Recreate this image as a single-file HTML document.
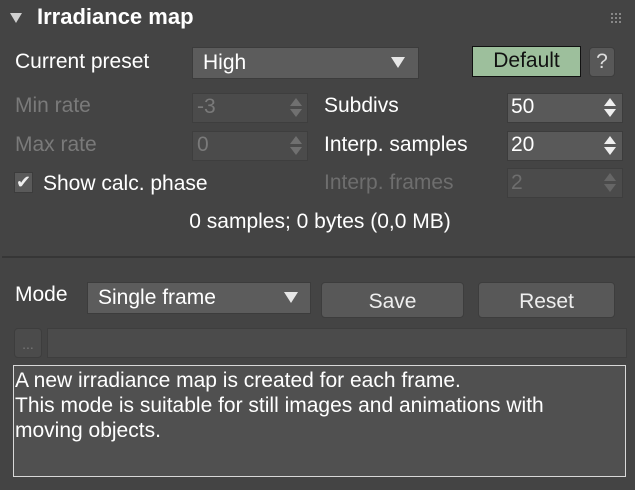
<!DOCTYPE html>
<html><head><meta charset="utf-8"><style>
*{margin:0;padding:0;box-sizing:border-box}
body{width:635px;height:490px;background:#444444;font-family:"Liberation Sans","DejaVu Sans",sans-serif;font-size:21px;color:#fff;position:relative;overflow:hidden}
.a{position:absolute;white-space:nowrap}
.f{position:absolute;background:#595959;border:1px solid #3c3c3c}
.fd{position:absolute;background:#4b4b4b;border:1px solid #3e3e3e}
.dis{color:#7a7a7a}
.btn{position:absolute;background:#585858;border:1px solid #3d3d3d;border-radius:4px;text-align:center;color:#eee}
</style></head><body>
<svg class="a" style="left:9px;top:12px" width="14" height="12"><polygon points="1,1 13,1 7,11" fill="#cfcfcf"/></svg>
<div class="a" style="left:37px;top:4px;font-weight:bold;font-size:22px">Irradiance map</div>
<svg class="a" style="left:611px;top:13px" width="12" height="10" fill="#888"><rect x="0" y="0" width="2" height="2"/><rect x="4" y="0" width="2" height="2"/><rect x="8" y="0" width="2" height="2"/><rect x="0" y="4" width="2" height="2"/><rect x="4" y="4" width="2" height="2"/><rect x="8" y="4" width="2" height="2"/><rect x="0" y="8" width="2" height="2"/><rect x="4" y="8" width="2" height="2"/><rect x="8" y="8" width="2" height="2"/></svg>

<div class="a" style="left:15px;top:50px">Current preset</div>
<div class="f" style="left:192px;top:47px;width:227px;height:32px;background:#5c5c5c"></div>
<div class="a" style="left:203px;top:51px">High</div>
<svg class="a" style="left:391px;top:57px" width="14" height="12"><polygon points="0,0 14,0 7,11" fill="#e6e6e6"/></svg>
<div class="a" style="left:472px;top:46px;width:109px;height:31px;background:#9dbf9c;border:1px solid #111;color:#111;text-align:center;line-height:28px">Default</div>
<div class="btn" style="left:589px;top:47px;width:26px;height:30px;line-height:28px;color:#ddd">?</div>

<div class="a dis" style="left:15px;top:94px">Min rate</div>
<div class="fd" style="left:192px;top:93px;width:116px;height:30px"></div>
<div class="a dis" style="left:197px;top:95px">-3</div>
<svg class="a" style="left:289px;top:98px" width="14" height="20"><polygon points="7,0 13,8 1,8" fill="#707070"/><polygon points="1,11 13,11 7,19" fill="#707070"/></svg>
<div class="a dis" style="left:15px;top:133px">Max rate</div>
<div class="fd" style="left:192px;top:131px;width:116px;height:30px"></div>
<div class="a dis" style="left:197px;top:133px">0</div>
<svg class="a" style="left:289px;top:136px" width="14" height="20"><polygon points="7,0 13,8 1,8" fill="#707070"/><polygon points="1,11 13,11 7,19" fill="#707070"/></svg>

<div class="a" style="left:324px;top:94px">Subdivs</div>
<div class="f" style="left:507px;top:93px;width:116px;height:30px"></div>
<div class="a" style="left:511px;top:95px">50</div>
<svg class="a" style="left:603px;top:98px" width="14" height="20"><polygon points="7,0 13,8 1,8" fill="#eee"/><polygon points="1,11 13,11 7,19" fill="#eee"/></svg>
<div class="a" style="left:324px;top:133px">Interp. samples</div>
<div class="f" style="left:507px;top:131px;width:116px;height:30px"></div>
<div class="a" style="left:511px;top:133px">20</div>
<svg class="a" style="left:603px;top:136px" width="14" height="20"><polygon points="7,0 13,8 1,8" fill="#eee"/><polygon points="1,11 13,11 7,19" fill="#eee"/></svg>
<div class="a dis" style="left:324px;top:171px;color:#6e6e6e">Interp. frames</div>
<div class="fd" style="left:507px;top:168px;width:116px;height:30px"></div>
<div class="a dis" style="left:511px;top:171px;color:#6e6e6e">2</div>
<svg class="a" style="left:603px;top:173px" width="14" height="20"><polygon points="7,0 13,8 1,8" fill="#666"/><polygon points="1,11 13,11 7,19" fill="#666"/></svg>

<div class="a" style="left:14px;top:172px;width:19px;height:21px;background:#5a5a5a;border:1px solid #3c3c3c"></div>
<div class="a" style="left:16px;top:172px;font-size:18px;color:#eee">✔</div>
<div class="a" style="left:43px;top:172px">Show calc. phase</div>

<div class="a" style="left:0;width:635px;text-align:center;top:210px;padding-left:5px">0 samples; 0 bytes (0,0 MB)</div>

<div class="a" style="left:2px;top:256px;width:633px;height:2px;background:#363636"></div>

<div class="a" style="left:15px;top:283px">Mode</div>
<div class="f" style="left:87px;top:282px;width:224px;height:32px;background:#5c5c5c"></div>
<div class="a" style="left:98px;top:286px">Single frame</div>
<svg class="a" style="left:284px;top:292px" width="14" height="12"><polygon points="0,0 14,0 7,11" fill="#e6e6e6"/></svg>
<div class="btn" style="left:321px;top:282px;width:143px;height:36px;line-height:38px">Save</div>
<div class="btn" style="left:478px;top:282px;width:137px;height:36px;line-height:38px">Reset</div>

<div class="btn" style="left:14px;top:328px;width:28px;height:30px;background:#4b4b4b;color:#777;line-height:30px;font-size:14px">...</div>
<div class="fd" style="left:47px;top:328px;width:580px;height:30px"></div>

<div class="a" style="left:13px;top:365px;width:613px;height:112px;border:1px solid #d8d8d8;background:#505050;line-height:25px;font-size:21px;padding:2px 0 0 1px;white-space:normal">A new irradiance map is created for each frame.<br>This mode is suitable for still images and animations with<br>moving objects.</div>
</body></html>
